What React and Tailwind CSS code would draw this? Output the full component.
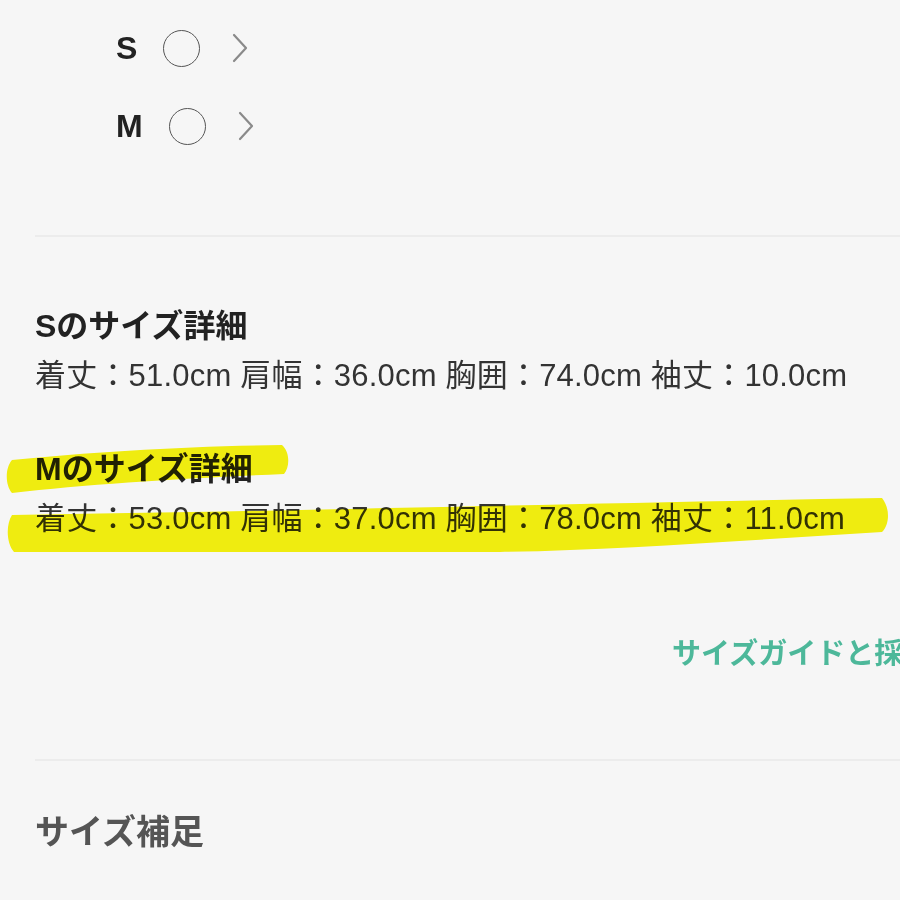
import React from 'react';

const font = { fontFamily: '"Liberation Sans", "Noto Sans CJK JP", sans-serif' };

const sizes = ['S', 'M'];

const details = [
  { size: 'S', text: '着丈：51.0cm 肩幅：36.0cm 胸囲：74.0cm 袖丈：10.0cm' },
  { size: 'M', text: '着丈：53.0cm 肩幅：37.0cm 胸囲：78.0cm 袖丈：11.0cm' },
];

const Chevron = () => (
  <svg width="18" height="30" viewBox="0 0 18 30" fill="none" stroke="#8a8a8a" strokeWidth="2.2" strokeLinecap="round" strokeLinejoin="round">
    <path d="M3 2 L15 15 L3 28" />
  </svg>
);

const App = () => {
  return (
    <div className="relative w-[900px] h-[900px] overflow-hidden bg-[#f6f6f6]" style={font}>
      <div className="relative">
        {/* Size options */}
        <div className="pt-[9px] pl-[116px]">
          {sizes.map((s) => (
            <div key={s} className="h-[78px] flex items-center">
              <span className="text-[32px] font-bold text-[#222] leading-none">{s}</span>
              <span className="ml-[26px] w-[37px] h-[37px] rounded-full border-[1.5px] border-[#555]" />
              <span className="ml-[31px] flex items-center">
                <Chevron />
              </span>
            </div>
          ))}
        </div>

        <div className="ml-[35px] mt-[70px] border-t-2 border-[#ececec]" />

        {/* Size details */}
        <div className="pl-[35px] pt-[64px]">
          {details.map((d, i) => (
            <div key={d.size} className={i === 0 ? '' : 'mt-[43px]'}>
              <div className="text-[32px] font-bold text-[#222] leading-[50px] whitespace-nowrap">{d.size}のサイズ詳細</div>
              <div className="text-[31px] text-[#333] leading-[50px] whitespace-nowrap tracking-[0.2px]">{d.text}</div>
            </div>
          ))}
        </div>

        <div className="mt-[85px] pl-[672px] whitespace-nowrap text-[29px] font-bold text-[#4db89a] leading-[50px]">
          サイズガイドと採寸方法
        </div>

        <div className="ml-[35px] mt-[80px] border-t-2 border-[#ececec]" />

        <div className="pl-[35px] pt-[46px] text-[34px] font-bold text-[#555] leading-[50px]">サイズ補足</div>
      </div>

      {/* Highlighter strokes */}
      <svg className="absolute left-0 top-0 pointer-events-none mix-blend-multiply" width="900" height="900" viewBox="0 0 900 900">
        <path d="M12 460 C 90 452, 190 446, 282 445 C 290 452, 290 467, 284 474 C 190 478, 90 484, 12 493 C 5 485, 5 468, 12 460 Z" fill="#f8f510" />
        <path d="M12 515 C 250 512, 550 504, 882 498 C 890 508, 890 524, 882 532 C 750 540, 620 550, 500 552 C 340 552, 160 552, 14 552 C 6 543, 6 524, 12 515 Z" fill="#f8f510" />
      </svg>
    </div>
  );
};

export default App;
